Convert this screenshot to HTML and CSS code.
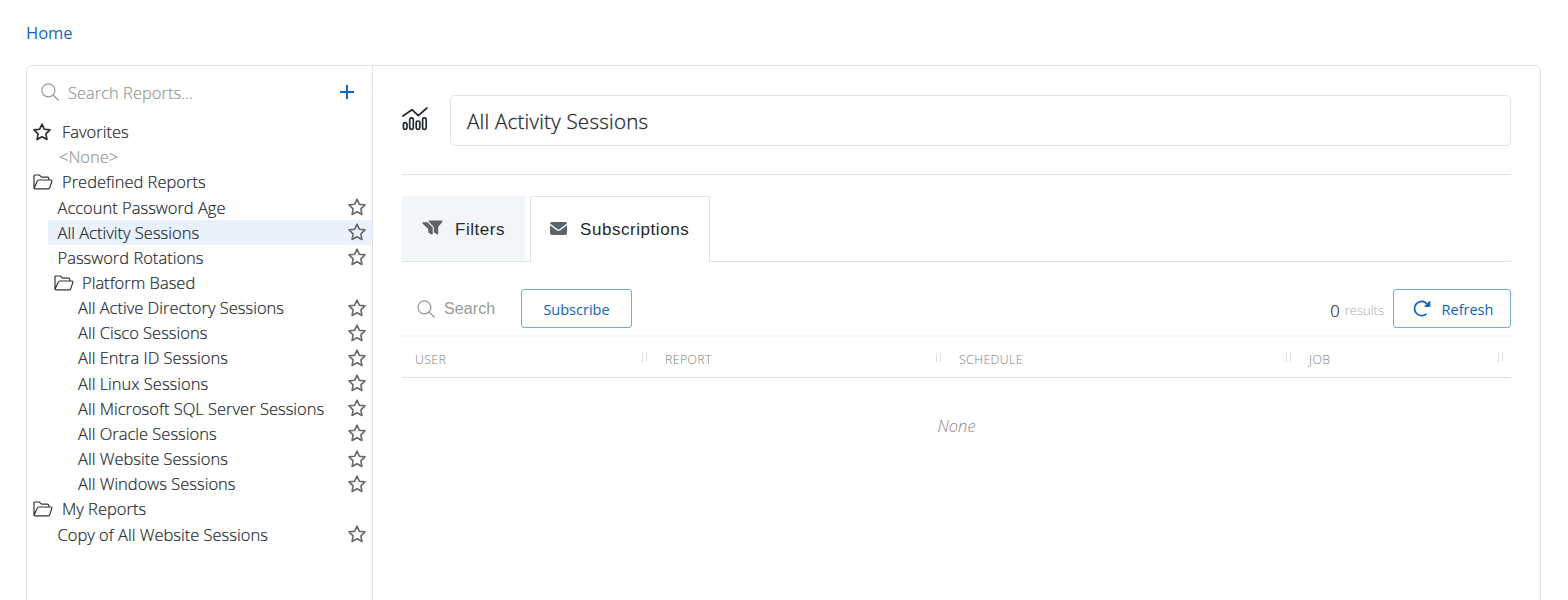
FILE: index.html
```html
<!DOCTYPE html>
<html lang="en">
<head>
<meta charset="utf-8">
<title>Reports</title>
<link rel="stylesheet" href="styles.css">
</head>
<body>
<svg class="defs" width="0" height="0">
  <symbol id="star" viewBox="0 0 18 18"><path d="M9 1.2 11.3 6.2 17 6.9 12.9 10.8 13.9 16.5 9 13.7 4.1 16.5 5.1 10.8 1 6.9 6.7 6.2Z" fill="none" stroke="currentColor" stroke-width="1.6" stroke-linejoin="round"/></symbol>
  <symbol id="folder" viewBox="0 0 20 16"><path d="M1 14.3V2Q1 1 2 1H6.2L8.6 3.1H14.4Q15.8 3.1 15.8 4.6V6M1 14.3 4.2 7.2Q4.7 6 6 6H17.8Q19.3 6 18.8 7.4L16.8 13.6Q16.4 14.8 15.2 14.8H1.8Q1 14.8 1 14.3Z" fill="none" stroke="currentColor" stroke-width="1.2" stroke-linejoin="round"/></symbol>
  <symbol id="search" viewBox="0 0 18 18"><g fill="none" stroke="currentColor" stroke-width="1.2" stroke-linecap="round"><circle cx="7.4" cy="7.4" r="6.5"/><path d="M12.2 12.2 17.2 17"/></g></symbol>
</svg>
<nav class="crumbs"><a class="home">Home</a></nav>
<div class="panel">
  <aside class="sidebar">
    <div class="finder"><svg class="lens"><use href="#search"/></svg><span class="hint">Search Reports...</span>
      <svg class="plus" viewBox="0 0 14 14"><path d="M7 0V14M0 7H14" stroke="currentColor" stroke-width="2"/></svg></div>
    <div class="tree">
      <div class="row group"><svg class="star dark"><use href="#star"/></svg><span>Favorites</span></div>
      <div class="row empty"><span>&lt;None&gt;</span></div>
      <div class="row group"><svg class="folder"><use href="#folder"/></svg><span>Predefined Reports</span></div>
      <div class="row item"><span>Account Password Age</span><svg class="star"><use href="#star"/></svg></div>
      <div class="row item selected"><span>All Activity Sessions</span><svg class="star"><use href="#star"/></svg></div>
      <div class="row item"><span>Password Rotations</span><svg class="star"><use href="#star"/></svg></div>
      <div class="row group nested"><svg class="folder"><use href="#folder"/></svg><span>Platform Based</span></div>
      <div class="row item deep"><span>All Active Directory Sessions</span><svg class="star"><use href="#star"/></svg></div>
      <div class="row item deep"><span>All Cisco Sessions</span><svg class="star"><use href="#star"/></svg></div>
      <div class="row item deep"><span>All Entra ID Sessions</span><svg class="star"><use href="#star"/></svg></div>
      <div class="row item deep"><span>All Linux Sessions</span><svg class="star"><use href="#star"/></svg></div>
      <div class="row item deep"><span>All Microsoft SQL Server Sessions</span><svg class="star"><use href="#star"/></svg></div>
      <div class="row item deep"><span>All Oracle Sessions</span><svg class="star"><use href="#star"/></svg></div>
      <div class="row item deep"><span>All Website Sessions</span><svg class="star"><use href="#star"/></svg></div>
      <div class="row item deep"><span>All Windows Sessions</span><svg class="star"><use href="#star"/></svg></div>
      <div class="row group"><svg class="folder"><use href="#folder"/></svg><span>My Reports</span></div>
      <div class="row item"><span>Copy of All Website Sessions</span><svg class="star"><use href="#star"/></svg></div>
    </div>
  </aside>
  <main class="main">
    <header class="title">
      <svg class="chart" viewBox="0 0 26 24"><g fill="none" stroke="currentColor" stroke-width="1.7" stroke-linecap="round" stroke-linejoin="round"><path d="M.9 9 10 2.7 16.3 8.6 24.9 1"/><rect x="1.4" y="15.6" width="3.6" height="6.8" rx="1.6"/><rect x="7.7" y="10.8" width="3.6" height="11.6" rx="1.6"/><rect x="14.2" y="14" width="3.6" height="8.4" rx="1.6"/><rect x="20.6" y="10.8" width="3.6" height="11.6" rx="1.6"/></g></svg>
      <div class="name">All Activity Sessions</div>
    </header>
    <div class="tabs">
      <div class="tab filters"><svg class="funnel" viewBox="0 0 21 15"><path d="M7.2 .5H19.8Q21 .8 20.2 1.9L16.2 7V14Q15.8 15 14.9 14.3L11.8 12.2V7L6.8 1.8Q6.2 .8 7.2 .5Z" fill="currentColor"/><path d="M1 2.2H5.5L10.7 7.5V14Q9.8 15 9 14.3L6.2 12.2V9L.4 3.4Q0 2.5 1 2.2Z" fill="currentColor"/></svg><span>Filters</span></div>
      <div class="tab active"><svg class="mail" viewBox="0 0 17 13"><path d="M1.5 0H15.5Q17 0 17 1.6L9.4 7.2Q8.5 7.8 7.6 7.2L0 1.6Q0 0 1.5 0ZM0 3.3 7 8.4Q8.5 9.3 10 8.4L17 3.3V11Q17 13 15 13H2Q0 13 0 11Z" fill="currentColor"/></svg><span>Subscriptions</span></div>
    </div>
    <div class="toolbar">
      <svg class="lens"><use href="#search"/></svg><span class="search-text">Search</span>
      <div class="button subscribe">Subscribe</div>
      <span class="count">0</span><span class="results">results</span>
      <div class="button refresh"><svg class="reload" viewBox="0 0 18 17"><g fill="none" stroke="currentColor" stroke-width="1.7"><path d="M13.4 13.8A7.1 7.1 0 1 1 12.6 2.7L14 3.9"/><path d="M16.9 1.3V6.4H11.8Z" fill="currentColor" stroke-width="1"/></g></svg><span>Refresh</span></div>
    </div>
    <div class="thead">
      <div class="th"><span>USER</span><i class="grip"></i></div>
      <div class="th"><span>REPORT</span><i class="grip"></i></div>
      <div class="th"><span>SCHEDULE</span><i class="grip"></i></div>
      <div class="th"><span>JOB</span><i class="grip"></i></div>
    </div>
    <div class="none">None</div>
  </main>
</div>
</body>
</html>
```
FILE: styles.css
```css
* { box-sizing: border-box; }
body { margin: 0; height: 600px; overflow: hidden; background: #fff; color: #24292f; font: 300 16.5px/25px "Open Sans", "Noto Sans", sans-serif; padding: 0 27px 0 26px; }
svg { display: block; flex: none; }
span { white-space: nowrap; }
.defs { position: absolute; }
.crumbs { height: 65px; padding: 20px 0 0 0; font-weight: 400; }
.home { color: #1268c3; }
.panel { display: flex; height: 560px; border: 1px solid #e3e4e5; border-radius: 6px; }
.sidebar { width: 346px; border-right: 1px solid #e3e4e5; -webkit-text-stroke: .2px; }
.finder { display: flex; align-items: center; height: 53px; padding: 0 18px 2px 14px; color: #999; }
.lens { width: 18px; height: 18px; color: #999; }
.hint { margin: 1px auto 0 9px; }
.plus { width: 14px; height: 14px; color: #0d66c9; }
.row { display: flex; align-items: center; height: 25.17px; line-height: 25px; }
.group { padding-left: 6px; }
.group span { margin-left: 9px; }
.group .folder { margin-left: -.5px; margin-right: .5px; }
.nested { padding-left: 27px; }
.nested span { margin-left: 8px; }
.empty { padding-left: 32px; color: #999; }
.item { margin-left: 21px; padding: 0 6.5px 0 9.5px; justify-content: space-between; }
.deep { padding-left: 30px; }
.selected { background: #e9f2fc; }
.folder { width: 20px; height: 16px; color: #333; }
.star { width: 18px; height: 18px; color: #686868; }
.dark { color: #24292f; margin-right: 2px; }
.main { flex: 1; padding: 29px 29px 0; }
.title { display: flex; height: 80px; border-bottom: 1px solid #e0e1e2; }
.chart { width: 26px; height: 24px; margin: 12px 22px 0 0; }
.name { flex: 1; height: 51px; padding-left: 16px; border: 1px solid #dfe1e3; border-radius: 5px; font-size: 20.6px; letter-spacing: .22px; line-height: 50px; -webkit-text-stroke: .3px; }
.tabs { display: flex; margin-top: 21px; height: 66px; box-shadow: inset 0 -1px #e0e1e2; font: 400 17px "Liberation Sans", sans-serif; letter-spacing: .55px; }
.tab { display: flex; align-items: center; height: 66px; }
.tab svg { color: #5d636b; }
.filters { width: 123px; padding: 2px 0 0 20px; background: #f3f6f8; border-bottom: 1px solid #e0e1e2; }
.funnel { width: 21px; height: 15px; margin: -4px 12px 0 0; }
.active { width: 180px; margin-left: 5px; padding-left: 19px; background: #fff; border: 1px solid #dfe1e3; border-bottom: 0; border-radius: 2px 2px 0 0; }
.mail { width: 17px; height: 13px; margin: -3px 13px 0 0; }
.toolbar { display: flex; align-items: center; height: 75px; padding: 20px 0 0 15px; border-bottom: 2px solid #f7f7f7; }
.search-text { width: 77px; margin-left: 9px; color: #999; font: 300 16px "Liberation Sans", sans-serif; letter-spacing: .1px; }
.button { display: flex; align-items: center; justify-content: center; height: 39px; padding-top: 2px; border: 1px solid #75aadb; border-radius: 3px; color: #0d63bd; font-size: 14.5px; font-weight: 400; }
.subscribe { width: 111px; margin-right: auto; }
.count { margin-top: 3px; -webkit-text-stroke: .2px; }
.results { margin: 4px 9px 0 5px; color: #aaa; font-size: 13px; }
.refresh { width: 118px; }
.reload { width: 18px; height: 17px; margin: -3px 11px 0 2px; }
.thead { display: grid; grid-template-columns: 250px 294px 350px 1fr; height: 41px; border-bottom: 1px solid #dedfe0; color: #808080; font-size: 12.4px; letter-spacing: .35px; }
.th { display: flex; align-items: center; justify-content: space-between; padding: 4px 5px 0 13px; }
.th:last-child { padding-right: 8px; }
.grip { width: 5px; height: 9px; margin-top: -3px; border: solid #e0e0e0; border-width: 0 1px; }
.none { margin-top: 35px; text-align: center; color: #888; font-style: italic; }
```
